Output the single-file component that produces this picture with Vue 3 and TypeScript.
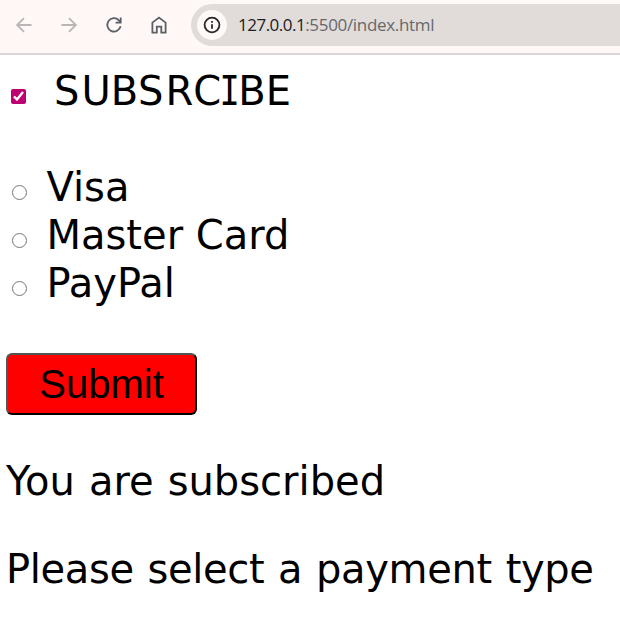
<script setup lang="ts">
import { ref } from 'vue'

const subscribed = ref(true)
const payment = ref('')
const methods = [
  { id: 'visa', label: 'Visa' },
  { id: 'master', label: 'Master Card' },
  { id: 'paypal', label: 'PayPal' },
]
</script>

<template>
  <div class="page">
    <header class="toolbar">
      <nav class="nav">
        <svg class="icon dim" viewBox="0 0 20 20"><path d="M17.5 10H3.2M10 3.1 3.1 10l6.9 6.9" /></svg>
        <svg class="icon dim" viewBox="0 0 20 20"><path d="M2.5 10h14.3M10 3.1l6.9 6.9-6.9 6.9" /></svg>
        <svg class="icon" viewBox="0 0 20 20"><path d="M16.6 11.2A6.7 6.7 0 1 1 14.9 5.3L16.4 7M16.7 2.6v5.1h-5.1" /></svg>
        <svg class="icon" viewBox="0 0 20 20"><path d="M3.4 17.6V7.6L10 2.6l6.6 5v10h-4.3v-6H7.8v6z" /></svg>
      </nav>
      <div class="address">
        <span class="info">
          <svg viewBox="0 0 18 18">
            <circle cx="9" cy="9" r="7.4" />
            <path d="M9 8.2v4.6M9 5v1.8" />
          </svg>
        </span>
        <span class="url"><span class="host">127.0.0.1</span>:5500/index.html</span>
      </div>
    </header>

    <main class="content">
      <label class="row">
        <input v-model="subscribed" type="checkbox" class="check" />
        <span class="caption"><span class="wide">S</span>UB<span class="wide">S</span>RC<span class="serif-i">I</span>BE</span>
      </label>
      <div class="methods">
        <label v-for="m in methods" :key="m.id" class="row">
          <input v-model="payment" type="radio" name="payment" class="radio" :value="m.id" />
          <span class="method">{{ m.label }}</span>
        </label>
      </div>
      <button class="submit" type="button">Submit</button>
      <p class="result first">You are subscribed</p>
      <p class="result second">Please select a payment type</p>
    </main>
  </div>
</template>

<style>
body {
  margin: 0;
  background: #fff;
  overflow: hidden;
}
</style>

<style scoped>
.page {
  height: 629px;
  overflow: hidden;
  background: #fff;
}
.toolbar {
  box-sizing: border-box;
  height: 55px;
  display: flex;
  padding-top: 4px;
  background: #fff8f6;
  border-bottom: 2px solid #dad6d6;
}
.nav {
  display: flex;
  gap: 25px;
  padding: 10.5px 0 0 13.7px;
}
.icon {
  width: 20px;
  height: 20px;
  fill: none;
  stroke: #5a6065;
  stroke-width: 1.8;
}
.icon.dim {
  stroke: #b9b6b5;
}
.address {
  box-sizing: border-box;
  flex: 1;
  height: 42px;
  margin-left: 22.3px;
  padding-left: 6px;
  display: flex;
  align-items: center;
  border-radius: 21px 0 0 21px;
  background: #e1dcd9;
}
.info {
  width: 30px;
  height: 30px;
  display: flex;
  align-items: center;
  justify-content: center;
  border-radius: 50%;
  background: #fff8f6;
}
.info svg {
  width: 18px;
  height: 18px;
  fill: none;
  stroke: #242628;
  stroke-width: 1.8;
}
.url {
  margin-left: 11px;
  font: 17px/24px "Open Sans", sans-serif;
  letter-spacing: -0.32px;
  color: #66686b;
  white-space: nowrap;
}
.host {
  letter-spacing: -0.5px;
  color: #202124;
}
.content {
  padding: 12px 6px 0;
  font: 40px/48px Verdana, "DejaVu Sans", sans-serif;
  color: #000;
}
.row {
  display: flex;
  align-items: flex-start;
  height: 48px;
  white-space: pre;
}
.check {
  width: 15px;
  height: 15px;
  margin: 22px 28px 0 5px;
  accent-color: #bf0073;
}
.caption {
  font-kerning: none;
}
.wide {
  letter-spacing: 2px;
}
.serif-i {
  display: inline-block;
  width: 17px;
  height: 48px;
  vertical-align: top;
  font-family: "DejaVu Sans Mono", monospace;
  text-indent: -3.5px;
  transform: scaleX(0.84);
}
.radio {
  width: 15px;
  height: 15px;
  margin: 22px 20px 0 6px;
}
.methods {
  margin-top: 48px;
}
.method {
  margin-left: -0.5px;
}
.submit {
  display: block;
  box-sizing: border-box;
  width: 191px;
  height: 62px;
  margin-top: 46px;
  padding: 0;
  border: 2px outset #000;
  border-radius: 6px;
  background: #f00;
  color: #000;
  font: 40px/56px "Liberation Sans", Arial, sans-serif;
}
.result {
  margin: 40px 0 0;
  white-space: pre;
}
.first {
  margin-top: 42px;
  word-spacing: 1.3px;
}
.second {
  letter-spacing: -0.34px;
  word-spacing: 1.4px;
}
</style>
